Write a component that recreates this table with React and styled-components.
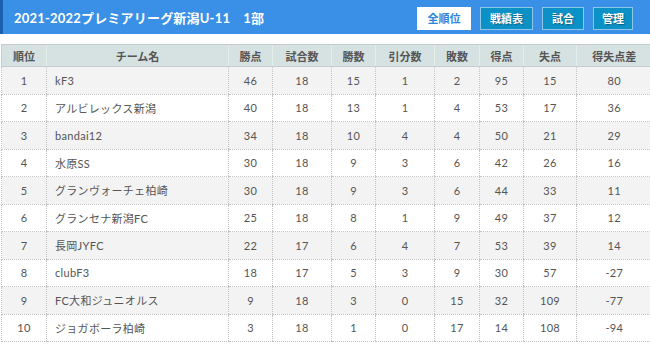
import React from "react";
import styled, { createGlobalStyle } from "styled-components";

const Global = createGlobalStyle`
  html, body { margin: 0; padding: 0; background: #fff; }
  body { font-family: Lato, "Noto Sans CJK JP", sans-serif; color: #555; }
`;

const Page = styled.div`
  width: 650px;
  height: 346px;
  overflow: hidden;
  display: flex;
  flex-direction: column;
`;

const Header = styled.header`
  height: 34px;
  box-sizing: border-box;
  background: #3a8fe6;
  border-left: 3px solid #1c5fae;
  display: flex;
  align-items: center;
  padding: 0 17px 0 11px;
`;

const Title = styled.h1`
  margin: 0;
  flex: 1;
  color: #fff;
  font-size: 13px;
  font-weight: 700;
  font-family: Lato, "Noto Sans CJK JP", sans-serif;
  letter-spacing: 0.2px;
  white-space: pre;
`;

const Nav = styled.nav`
  display: flex;
  gap: 9px;
  margin-top: 2px;
`;

const NavButton = styled.a`
  box-sizing: border-box;
  height: 23px;
  width: ${(p) => p.$w}px;
  display: flex;
  align-items: center;
  justify-content: center;
  font-size: 11px;
  font-weight: 700;
  font-family: "Noto Sans CJK JP", sans-serif;
  border: 1px solid ${(p) => (p.$active ? "#ffffff" : "#8fc6ea")};
  background: ${(p) => (p.$active ? "#ffffff" : "#0c91c6")};
  color: ${(p) => (p.$active ? "#2a86dc" : "#ffffff")};
  text-shadow: ${(p) => (p.$active ? "none" : "1px 1px 1px rgba(0,0,0,0.35)")};
`;

const Table = styled.table`
  margin-top: 10px;
  margin-left: 1px;
  width: 650px;
  border-collapse: collapse;
  table-layout: fixed;
  font-size: 11px;
`;

const Th = styled.th`
  height: 21px;
  padding: 0;
  background: #d6e1e1;
  color: #555;
  font-weight: 700;
  font-family: "Noto Sans CJK JP", sans-serif;
  font-size: 11px;
  text-align: center;
  border-top: 1px solid #c8cccc;
  border-bottom: 1px solid #c8cccc;
  border-left: 1px solid #e6eded;
  &:first-child { border-left: 1px solid #c8cccc; }
`;

const Tr = styled.tr`
  height: 27.5px;
  background: ${(p) => (p.$odd ? "#f3f3f3" : "#ffffff")};
`;

const Td = styled.td`
  padding: 0 0 0 ${(p) => (p.$left ? "8px" : "0")};
  text-align: ${(p) => (p.$left ? "left" : "center")};
  color: #555;
  font-family: Lato, "Noto Sans CJK JP", sans-serif;
  font-size: 11px;
  letter-spacing: 0.3px;
  border-bottom: 1px dotted #c4c4c4;
  border-left: 1px dotted #c4c4c4;
  white-space: nowrap;
`;

const cols = [45, 182, 44, 59, 44, 59, 45, 44, 53, 75];
const heads = ["順位", "チーム名", "勝点", "試合数", "勝数", "引分数", "敗数", "得点", "失点", "得失点差"];

const rows = [
  [1, "kF3", 46, 18, 15, 1, 2, 95, 15, 80],
  [2, "アルビレックス新潟", 40, 18, 13, 1, 4, 53, 17, 36],
  [3, "bandai12", 34, 18, 10, 4, 4, 50, 21, 29],
  [4, "水原SS", 30, 18, 9, 3, 6, 42, 26, 16],
  [5, "グランヴォーチェ柏崎", 30, 18, 9, 3, 6, 44, 33, 11],
  [6, "グランセナ新潟FC", 25, 18, 8, 1, 9, 49, 37, 12],
  [7, "長岡JYFC", 22, 17, 6, 4, 7, 53, 39, 14],
  [8, "clubF3", 18, 17, 5, 3, 9, 30, 57, -27],
  [9, "FC大和ジュニオルス", 9, 18, 3, 0, 15, 32, 109, -77],
  [10, "ジョガボーラ柏崎", 3, 18, 1, 0, 17, 14, 108, -94],
];

const buttons = [
  ["全順位", 54, true],
  ["戦績表", 53, false],
  ["試合", 42, false],
  ["管理", 40, false],
];

export default function App() {
  return (
    <Page>
      <Global />
      <Header>
        <Title>{"2021-2022プレミアリーグ新潟U-11　1部"}</Title>
        <Nav>
          {buttons.map(([t, w, a]) => (
            <NavButton key={t} $w={w} $active={a}>{t}</NavButton>
          ))}
        </Nav>
      </Header>
      <Table>
        <colgroup>
          {cols.map((w, i) => (
            <col key={i} style={{ width: w }} />
          ))}
        </colgroup>
        <thead>
          <tr>
            {heads.map((h) => (
              <Th key={h}>{h}</Th>
            ))}
          </tr>
        </thead>
        <tbody>
          {rows.map((r, i) => (
            <Tr key={r[0]} $odd={i % 2 === 0}>
              {r.map((c, j) => (
                <Td key={j} $left={j === 1}>{c}</Td>
              ))}
            </Tr>
          ))}
        </tbody>
      </Table>
    </Page>
  );
}
